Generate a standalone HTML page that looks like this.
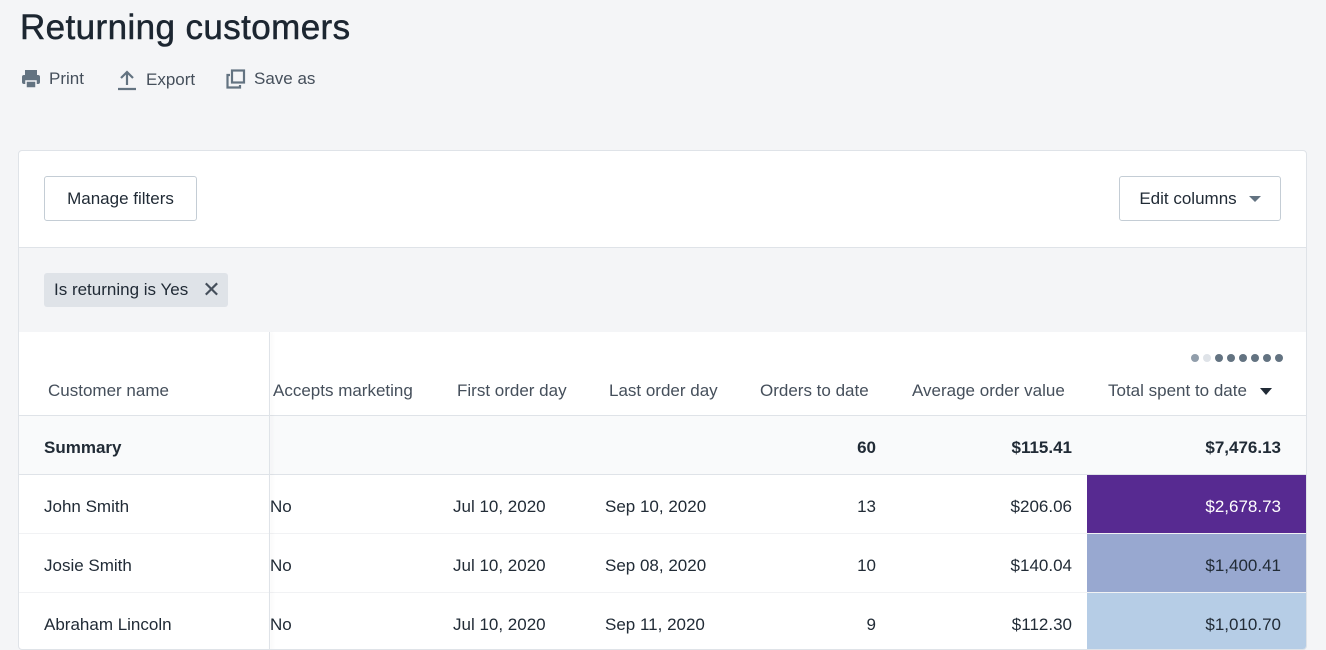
<!DOCTYPE html>
<html><head><style>
*{box-sizing:border-box;margin:0;padding:0}
body{width:1326px;height:632px;overflow:hidden;background:#f4f5f7;font-family:"Liberation Sans",sans-serif;color:#212b36;position:relative}
.a{position:absolute}
h1{position:absolute;left:20px;top:8px;font-size:35px;font-weight:normal;letter-spacing:0.4px;color:#1c2631;-webkit-text-stroke:0.5px #1c2631}
.act{top:69px;font-size:17px;color:#454f5b;display:flex;align-items:center;gap:8px}
.card{left:18px;top:150px;width:1289px;height:500px;background:#fff;border:1px solid #dfe3e8;border-radius:4px;overflow:hidden}
.btn{border:1px solid #c4cdd5;border-radius:3px;background:#fff;font-size:17px;color:#212b36;height:45px;display:flex;align-items:center;justify-content:center}
.fbar{left:0;top:96px;width:100%;height:85px;background:#f4f5f7;border-top:1px solid #dfe3e8}
.tag{left:25px;top:25px;height:34px;width:184px;background:#dfe3e8;border-radius:3px;font-size:17px;display:flex;align-items:center;padding-left:10px;color:#212b36}
.t{font-size:17px;white-space:nowrap}
.hd{color:#454f5b;top:230px}
.r{text-align:right}
.line{left:0;width:100%;height:1px;background:#dfe3e8}
</style></head><body>
<h1>Returning customers</h1>
<div class="a act" style="left:21px"><svg width="20" height="20" viewBox="0 0 20 20"><rect x="4" y="1" width="12" height="5" fill="#637381"/><rect x="1" y="6" width="18" height="9" rx="2" fill="#637381"/><rect x="5" y="12" width="10" height="7" fill="#637381" stroke="#f4f5f7" stroke-width="1.5"/></svg>Print</div>
<div class="a act" style="left:116px"><svg width="22" height="22" viewBox="0 0 22 22"><path d="M11 3v13M5 9l6-6 6 6M2 20h18" stroke="#637381" stroke-width="2.2" fill="none"/></svg>Export</div>
<div class="a act" style="left:226px"><svg width="20" height="20" viewBox="0 0 20 20"><rect x="6" y="1.5" width="12" height="12" fill="none" stroke="#637381" stroke-width="2.2"/><path d="M4 6H1.5v12.5H14V16" fill="none" stroke="#637381" stroke-width="2.2"/></svg>Save as</div>
<div class="a card">
 <div class="a btn" style="left:25px;top:25px;width:153px">Manage filters</div>
 <div class="a btn" style="left:1100px;top:25px;width:162px">Edit columns <span style="display:inline-block;margin-left:12px;border-left:6px solid transparent;border-right:6px solid transparent;border-top:6px solid #637381"></span></div>
 <div class="a fbar"><div class="a tag">Is returning is Yes<span style="margin-left:14px;font-size:22px;color:#454f5b">✕</span></div></div>
 <div class="a" style="left:1172px;top:203px;display:flex;gap:4px">
  <i style="width:8px;height:8px;border-radius:50%;background:#919eab"></i><i style="width:8px;height:8px;border-radius:50%;background:#dfe3e8"></i>
  <i style="width:8px;height:8px;border-radius:50%;background:#637381"></i><i style="width:8px;height:8px;border-radius:50%;background:#637381"></i><i style="width:8px;height:8px;border-radius:50%;background:#637381"></i><i style="width:8px;height:8px;border-radius:50%;background:#637381"></i><i style="width:8px;height:8px;border-radius:50%;background:#637381"></i><i style="width:8px;height:8px;border-radius:50%;background:#637381"></i>
 </div>
 <div class="a t hd" style="left:29px">Customer name</div>
 <div class="a t hd" style="left:254px">Accepts marketing</div>
 <div class="a t hd" style="left:438px">First order day</div>
 <div class="a t hd" style="left:590px">Last order day</div>
 <div class="a t hd" style="left:741px">Orders to date</div>
 <div class="a t hd" style="left:893px">Average order value</div>
 <div class="a t hd" style="left:1089px">Total spent to date <span style="display:inline-block;margin-left:8px;border-left:6px solid transparent;border-right:6px solid transparent;border-top:7px solid #212b36;vertical-align:middle"></span></div>
 <div class="a line" style="top:264px"></div>
 <div class="a" style="left:0;top:265px;width:100%;height:58px;background:#f9fafb"></div>
 <div class="a line" style="top:323px"></div>
 <div class="a line" style="top:382px;background:#f1f2f4"></div>
 <div class="a line" style="top:441px;background:#f1f2f4"></div>
 <div class="a t" style="left:25px;top:287px;font-weight:bold">Summary</div>
 <div class="a t r" style="left:700px;width:157px;top:287px;font-weight:bold">60</div>
 <div class="a t r" style="left:900px;width:153px;top:287px;font-weight:bold">$115.41</div>
 <div class="a t r" style="left:1100px;width:162px;top:287px;font-weight:bold">$7,476.13</div>
 <div class="a" style="left:1068px;top:324px;width:220px;height:58px;background:#572a91"></div>
 <div class="a" style="left:1068px;top:383px;width:220px;height:58px;background:#98a8d0"></div>
 <div class="a" style="left:1068px;top:442px;width:220px;height:58px;background:#b6cde6"></div>
 <div class="a t" style="left:25px;top:346px">John Smith</div>
 <div class="a t" style="left:251px;top:346px">No</div>
 <div class="a t" style="left:434px;top:346px">Jul 10, 2020</div>
 <div class="a t" style="left:586px;top:346px">Sep 10, 2020</div>
 <div class="a t r" style="left:700px;width:157px;top:346px">13</div>
 <div class="a t r" style="left:900px;width:153px;top:346px">$206.06</div>
 <div class="a t r" style="left:1100px;width:162px;top:346px;color:#fff">$2,678.73</div>
 <div class="a t" style="left:25px;top:405px">Josie Smith</div>
 <div class="a t" style="left:251px;top:405px">No</div>
 <div class="a t" style="left:434px;top:405px">Jul 10, 2020</div>
 <div class="a t" style="left:586px;top:405px">Sep 08, 2020</div>
 <div class="a t r" style="left:700px;width:157px;top:405px">10</div>
 <div class="a t r" style="left:900px;width:153px;top:405px">$140.04</div>
 <div class="a t r" style="left:1100px;width:162px;top:405px">$1,400.41</div>
 <div class="a t" style="left:25px;top:464px">Abraham Lincoln</div>
 <div class="a t" style="left:251px;top:464px">No</div>
 <div class="a t" style="left:434px;top:464px">Jul 10, 2020</div>
 <div class="a t" style="left:586px;top:464px">Sep 11, 2020</div>
 <div class="a t r" style="left:700px;width:157px;top:464px">9</div>
 <div class="a t r" style="left:900px;width:153px;top:464px">$112.30</div>
 <div class="a t r" style="left:1100px;width:162px;top:464px">$1,010.70</div>
 <div class="a" style="left:250px;top:181px;width:1px;height:320px;background:#dfe3e8;box-shadow:2px 0 3px rgba(0,0,0,0.08)"></div>
</div>
</body></html>
